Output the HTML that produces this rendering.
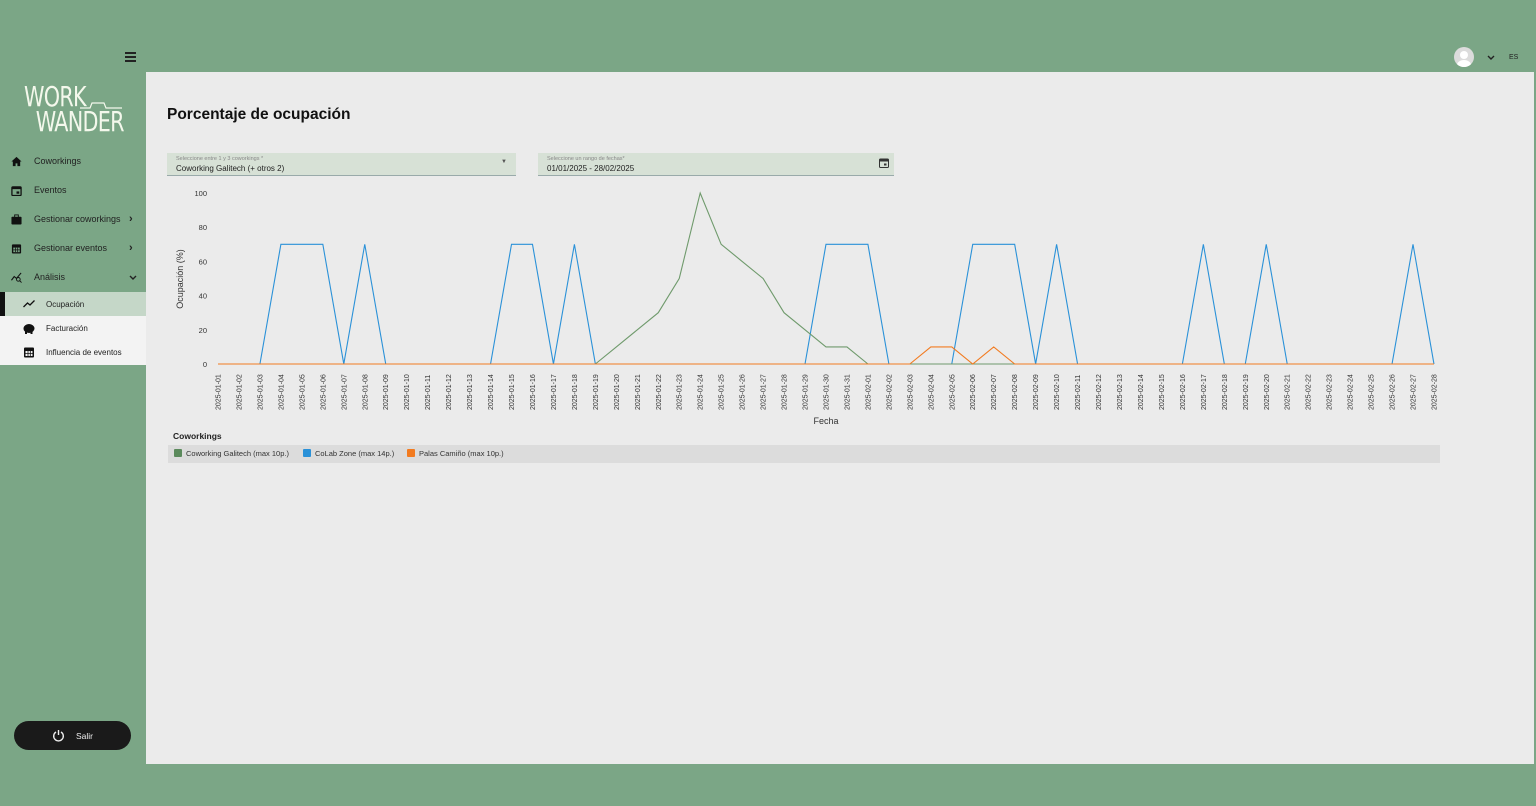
<!DOCTYPE html>
<html><head><meta charset="utf-8"><style>
*{margin:0;padding:0;box-sizing:border-box}
body{width:1536px;height:806px;background:#7ba686;font-family:"Liberation Sans","DejaVu Sans",sans-serif;position:relative;overflow:hidden;color:#222}
.main{position:absolute;left:146px;top:72px;width:1388px;height:692px;background:#ebebeb}
.ham{position:absolute;left:125px;top:52px;width:11px}
.ham i{display:block;height:1.5px;background:#222;margin-bottom:2.5px}
.logo{position:absolute;left:24px;top:84px;color:#f4f8ec;font-size:28px;line-height:25px;letter-spacing:-1px;font-family:"DejaVu Sans","Liberation Sans",sans-serif;transform:scaleX(0.74);transform-origin:0 0;white-space:nowrap}
.nav{position:absolute;left:0;width:146px;font-size:9px;color:#222}
.nav .it{position:absolute;left:0;width:146px;height:20px;display:flex;align-items:center}
.nav .ic{position:absolute;left:11px;width:11px;height:11px}
.nav .tx{position:absolute;left:34px}
.nav .ch{position:absolute;left:129px;font-size:11px;font-weight:bold}
.sub{position:absolute;left:0;top:292px;width:146px;height:73px;background:#f3f3f3}
.sub .r{position:absolute;left:0;width:146px;height:24px;font-size:8px}
h1{position:absolute;left:167px;top:106px;font-size:15.5px;font-weight:bold;color:#111}
.sel{position:absolute;top:153px;height:23px;background:#d7e1d6;border-bottom:1px solid #9aa;}
.sel .l{position:absolute;left:9px;top:3px;font-size:5.5px;color:#888}
.sel .v{position:absolute;left:9px;top:11px;font-size:8px;color:#222}
.legend{position:absolute;left:168px;top:445px;width:1272px;height:18px;background:#dcdcdc;font-size:7.5px;color:#333}
.legend span{position:absolute;top:4px}
.legend b{display:inline-block;width:8px;height:8px;border-radius:1px;vertical-align:-1px;margin-right:4px}
.btn{position:absolute;left:14px;top:721px;width:117px;height:29px;background:#1a1a1a;border-radius:15px;color:#eee;font-size:8.5px}
</style></head><body>
<div class="main"></div>
<div class="ham"><i></i><i></i><i></i></div>
<div class="logo">WORK<br>&nbsp;&nbsp;WANDER</div>
<svg style="position:absolute;left:80px;top:100px" width="43" height="10"><path d="M0 8H10l2-5h12l2 5h16" stroke="#f4f8ec" fill="none" stroke-width="1.2"/></svg>
<div class="nav" style="top:0">
 <div class="it" style="top:151px"><svg class="ic" viewBox="0 0 12 12"><path d="M6 1L0.5 6H2v5h3V8h2v3h3V6h1.5z" fill="#111"/></svg><span class="tx">Coworkings</span></div>
 <div class="it" style="top:180px"><svg class="ic" viewBox="0 0 12 12"><rect x="1" y="2" width="10" height="9.5" rx="1" fill="none" stroke="#111" stroke-width="1.4"/><rect x="1" y="2" width="10" height="2.5" fill="#111"/><rect x="6" y="7" width="3" height="2.5" fill="#111"/></svg><span class="tx">Eventos</span></div>
 <div class="it" style="top:209px"><svg class="ic" viewBox="0 0 12 12"><rect x="0.5" y="3" width="11" height="8.5" rx="1" fill="#111"/><rect x="4" y="1" width="4" height="3" fill="none" stroke="#111"/></svg><span class="tx">Gestionar coworkings</span><span class="ch">›</span></div>
 <div class="it" style="top:238px"><svg class="ic" viewBox="0 0 12 12"><rect x="1" y="1.5" width="10" height="10" rx="1" fill="#111"/><rect x="2.5" y="5" width="7" height="5" fill="#7ba686"/><path d="M2.5 7.5h7M5 5v5M7.3 5v5" stroke="#111" stroke-width=".8"/></svg><span class="tx">Gestionar eventos</span><span class="ch">›</span></div>
 <div class="it" style="top:267px"><svg class="ic" viewBox="0 0 12 12"><path d="M0.5 9l3-4 2.5 2 5-6" stroke="#111" fill="none" stroke-width="1.2"/><circle cx="8" cy="8" r="2" fill="none" stroke="#111"/><path d="M9.5 9.5l2 2" stroke="#111"/></svg><span class="tx">Análisis</span><svg style="position:absolute;left:129px;top:8px" width="8" height="5"><path d="M1 1l3 3 3-3" stroke="#222" fill="none" stroke-width="1.4"/></svg></div>
</div>
<div class="sub">
 <div class="r" style="top:0;background:#c5d7c8"><div style="position:absolute;left:0;top:0;width:5px;height:24px;background:#111"></div><svg style="position:absolute;left:23px;top:8px" width="12" height="8"><path d="M0.5 7l4-4 2.5 2 4.5-4.5" stroke="#111" fill="none" stroke-width="1.3"/></svg><span style="position:absolute;left:46px;top:8px">Ocupación</span></div>
 <div class="r" style="top:24px"><svg style="position:absolute;left:23px;top:6px" width="12" height="12"><ellipse cx="6" cy="6.5" rx="5.5" ry="4.5" fill="#111"/><rect x="2" y="9" width="2" height="3" fill="#111"/><rect x="7.5" y="9" width="2" height="3" fill="#111"/></svg><span style="position:absolute;left:46px;top:8px">Facturación</span></div>
 <div class="r" style="top:48px"><svg style="position:absolute;left:23px;top:6px" width="12" height="12"><rect x="1" y="1.5" width="10" height="10" rx="1" fill="#111"/><rect x="2.5" y="5" width="7" height="5" fill="#f3f3f3"/><path d="M2.5 7.5h7M5 5v5M7.3 5v5" stroke="#111" stroke-width=".8"/></svg><span style="position:absolute;left:46px;top:8px">Influencia de eventos</span></div>
</div>
<div style="position:absolute;left:1454px;top:47px;width:20px;height:20px;border-radius:50%;background:#dcdcdc;overflow:hidden"><div style="position:absolute;left:6px;top:4px;width:8px;height:8px;border-radius:50%;background:#fff"></div><div style="position:absolute;left:3px;top:13px;width:14px;height:10px;border-radius:50%;background:#fff"></div></div>
<svg style="position:absolute;left:1487px;top:55px" width="8" height="5"><path d="M1 1l3 3 3-3" stroke="#222" fill="none" stroke-width="1.4"/></svg>
<div style="position:absolute;left:1509px;top:54px;font-size:7px;color:#222">ES</div>
<h1>Porcentaje de ocupación</h1>
<div class="sel" style="left:167px;width:349px"><div class="l">Seleccione entre 1 y 3 coworkings *</div><div class="v">Coworking Galitech (+ otros 2)</div><div style="position:absolute;right:9px;top:6px;font-size:6px;color:#555">▼</div></div>
<div class="sel" style="left:538px;width:356px"><div class="l">Seleccione un rango de fechas*</div><div class="v">01/01/2025 - 28/02/2025</div><svg style="position:absolute;right:5px;top:5px" width="10" height="10"><rect x="0.5" y="1" width="9" height="8.5" rx="1" fill="none" stroke="#333"/><rect x="0.5" y="1" width="9" height="2.5" fill="#333"/><rect x="5" y="5.5" width="2.5" height="2" fill="#333"/></svg></div>
<svg id="ch" style="position:absolute;left:0;top:0" width="1536" height="440"></svg>
<div style="position:absolute;left:173px;top:431px;font-size:8.5px;font-weight:bold;color:#222">Coworkings</div>
<div class="legend">
 <span style="left:6px"><b style="background:#5b8a5c"></b>Coworking Galitech (max 10p.)</span>
 <span style="left:135px"><b style="background:#2a91d8"></b>CoLab Zone (max 14p.)</span>
 <span style="left:239px"><b style="background:#f27b20"></b>Palas Camiño (max 10p.)</span>
</div>
<div class="btn"><svg style="position:absolute;left:38px;top:8px" width="13" height="13"><path d="M4 3A4.8 4.8 0 1 0 9 3" stroke="#eee" fill="none" stroke-width="1.4"/><path d="M6.5 1v5" stroke="#eee" stroke-width="1.4"/></svg><span style="position:absolute;left:62px;top:10px">Salir</span></div>
<script>
var s=document.getElementById('ch'),h='';
function X(i){return 218+i*20.965}function Y(v){return 364-v*1.71}
var yl=[0,20,40,60,80,100];yl.forEach(function(v){h+='<text x="207" y="'+(Y(v)+3)+'" font-size="7.5" text-anchor="end" fill="#333" font-family="Liberation Sans">'+v+'</text>'});
h+='<text transform="translate(183,279) rotate(-90)" font-size="9" text-anchor="middle" fill="#333" font-family="Liberation Sans">Ocupación (%)</text>';
for(var i=0;i<59;i++){var d=new Date(Date.UTC(2025,0,1+i));var t=d.toISOString().slice(0,10);h+='<text transform="translate('+(X(i)+2.5)+',410) rotate(-90)" font-size="7" fill="#333" font-family="Liberation Sans">'+t+'</text>'}
h+='<text x="826" y="424" font-size="9" text-anchor="middle" fill="#333" font-family="Liberation Sans">Fecha</text>';
var B=new Array(59).fill(0);[3,4,5,7,14,15,17,29,30,31,36,37,38,40,47,50,57].forEach(function(i){B[i]=70});
var G=new Array(59).fill(0);var gv={19:10,20:20,21:30,22:50,23:100,24:70,25:60,26:50,27:30,28:20,29:10,30:10};for(var k in gv)G[k]=gv[k];
var O=new Array(59).fill(0);O[34]=10;O[35]=10;O[37]=10;
function pl(a,c){return '<polyline fill="none" stroke="'+c+'" stroke-width="1.1" points="'+a.map(function(v,i){return X(i)+','+Y(v)}).join(' ')+'"/>'}
h+=pl(B,'#2a91d8')+pl(G,'#6f9a6c')+pl(O,'#f27b20');
s.innerHTML=h;
</script>
</body></html>
